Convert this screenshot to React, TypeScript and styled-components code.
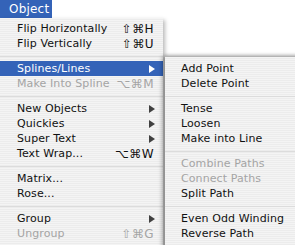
import React from "react";
import styled, { createGlobalStyle } from "styled-components";

const Global = createGlobalStyle`
  html, body { margin: 0; padding: 0; background: #ffffff; overflow: hidden; }
  body { font-family: "DejaVu Sans", "Noto Sans", sans-serif; }
`;

const Screen = styled.div`
  position: relative;
  width: 295px;
  height: 245px;
  background: #ffffff;
  overflow: hidden;
`;

const MenuBar = styled.div`
  display: flex;
  height: 18px;
  background: #ffffff;
`;

const MenuTitle = styled.div`
  display: flex;
  align-items: center;
  padding: 0 9px;
  width: 34px;
  background: #3463b8;
  color: #ffffff;
  font-size: 12px;
  letter-spacing: 0.2px;
`;

const Panel = styled.div<{ $left: number; $top: number; $width: number; $padTop: number }>`
  position: absolute;
  left: ${(p) => p.$left}px;
  top: ${(p) => p.$top}px;
  width: ${(p) => p.$width}px;
  padding-top: ${(p) => p.$padTop}px;
  padding-bottom: 6px;
  display: flex;
  flex-direction: column;
  background: repeating-linear-gradient(
    to bottom,
    #f4f4f4 0px,
    #f4f4f4 1px,
    #ececec 1px,
    #ececec 2px
  );
`;

const MainPanel = styled(Panel)`
  box-shadow: 2px 2px 4px rgba(0, 0, 0, 0.28);
  z-index: 1;
`;

const SubPanel = styled(Panel)`
  border-top: 1px solid #b4b4b4;
  box-shadow: -3px 0 4px rgba(0, 0, 0, 0.3), 0 -1px 3px rgba(0, 0, 0, 0.15);
  z-index: 2;
  height: 200px;
`;

const Row = styled.div<{ $active?: boolean; $disabled?: boolean; $indent: number }>`
  display: flex;
  align-items: center;
  height: 15px;
  padding-left: ${(p) => p.$indent}px;
  padding-right: 9px;
  font-size: 11px;
  letter-spacing: 0.1px;
  white-space: nowrap;
  background: ${(p) => (p.$active ? "#3463b8" : "transparent")};
  color: ${(p) => (p.$active ? "#ffffff" : p.$disabled ? "#a4a4a4" : "#111111")};
`;

const Label = styled.span`
  flex: 1;
`;

const Shortcut = styled.span`
  font-size: 12px;
  letter-spacing: 0.4px;
`;

const Separator = styled.div`
  height: 10px;
  display: flex;
  align-items: center;
  &::after {
    content: "";
    flex: 1;
    height: 1px;
    background: #dcdcdc;
  }
`;

const Arrow = styled.span<{ $light?: boolean }>`
  width: 0;
  height: 0;
  margin-right: -1px;
  border-top: 4px solid transparent;
  border-bottom: 4px solid transparent;
  border-left: 6px solid ${(p) => (p.$light ? "#ffffff" : "#404040")};
`;

type Item =
  | { sep: true }
  | { sep?: false; label: string; key?: string; sub?: boolean; active?: boolean; disabled?: boolean };

const mainItems: Item[] = [
  { label: "Flip Horizontally", key: "⇧⌘H" },
  { label: "Flip Vertically", key: "⇧⌘U" },
  { sep: true },
  { label: "Splines/Lines", sub: true, active: true },
  { label: "Make Into Spline", key: "⌥⌘M", disabled: true },
  { sep: true },
  { label: "New Objects", sub: true },
  { label: "Quickies", sub: true },
  { label: "Super Text", sub: true },
  { label: "Text Wrap...", key: "⌥⌘W" },
  { sep: true },
  { label: "Matrix..." },
  { label: "Rose..." },
  { sep: true },
  { label: "Group", sub: true },
  { label: "Ungroup", key: "⇧⌘G", disabled: true },
];

const subItems: Item[] = [
  { label: "Add Point" },
  { label: "Delete Point" },
  { sep: true },
  { label: "Tense" },
  { label: "Loosen" },
  { label: "Make into Line" },
  { sep: true },
  { label: "Combine Paths", disabled: true },
  { label: "Connect Paths", disabled: true },
  { label: "Split Path" },
  { sep: true },
  { label: "Even Odd Winding" },
  { label: "Reverse Path" },
];

function renderItems(items: Item[], indent: number) {
  return items.map((it, i) =>
    it.sep ? (
      <Separator key={i} />
    ) : (
      <Row key={i} $active={it.active} $disabled={it.disabled} $indent={indent}>
        <Label>{it.label}</Label>
        {it.key && <Shortcut>{it.key}</Shortcut>}
        {it.sub && <Arrow $light={it.active} />}
      </Row>
    )
  );
}

export default function App() {
  return (
    <Screen>
      <Global />
      <MenuBar>
        <MenuTitle>Object</MenuTitle>
      </MenuBar>
      <MainPanel $left={0} $top={18} $width={163} $padTop={3}>
        {renderItems(mainItems, 17)}
      </MainPanel>
      <SubPanel $left={165} $top={56} $width={140} $padTop={4}>
        {renderItems(subItems, 16)}
      </SubPanel>
    </Screen>
  );
}
